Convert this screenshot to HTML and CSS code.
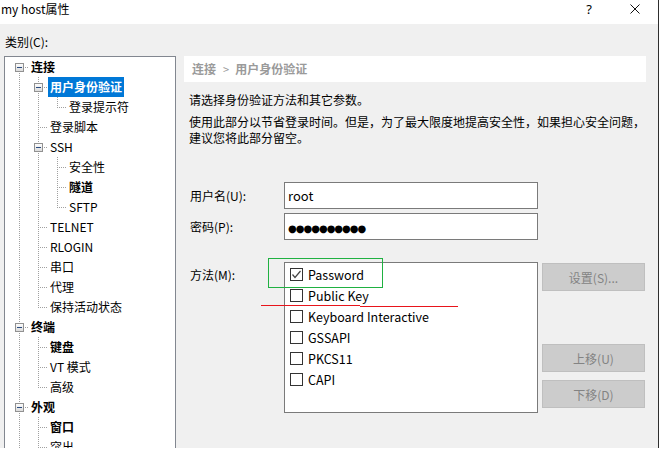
FILE: index.html
```html
<!DOCTYPE html>
<html>
<head>
    <meta charset="UTF-8">
    <title>my host属性</title>
    <link rel="stylesheet" href="styles.css">
</head>
<body>
    <div class="window">
        <div class="titlebar">
            <span class="title">my host属性</span>
            <span class="caption-btn help">?</span>
            <span class="caption-btn close">
                <svg width="10" height="10" viewBox="0 0 10 10"><path d="M0.5 0.5L9.5 9.5M9.5 0.5L0.5 9.5" stroke="#111" stroke-width="1" fill="none"/></svg>
            </span>
        </div>

        <div class="dialog">
            <div class="cat-label">类别(C):</div>
            <div class="main">
                <!-- category tree: each cell draws one column of connector lines -->
                <ul class="tree">
                    <li class="node"><span class="c xd"><span class="exp"></span></span><span class="lbl bold">连接</span></li>
                    <li class="node"><span class="c v"></span><span class="c xud"><span class="exp"></span></span><span class="lbl bold selected">用户身份验证</span></li>
                    <li class="node"><span class="c v"></span><span class="c v"></span><span class="c e"></span><span class="lbl">登录提示符</span></li>
                    <li class="node"><span class="c v"></span><span class="c t"></span><span class="lbl">登录脚本</span></li>
                    <li class="node"><span class="c v"></span><span class="c xud"><span class="exp"></span></span><span class="lbl">SSH</span></li>
                    <li class="node"><span class="c v"></span><span class="c v"></span><span class="c t"></span><span class="lbl">安全性</span></li>
                    <li class="node"><span class="c v"></span><span class="c v"></span><span class="c t"></span><span class="lbl bold">隧道</span></li>
                    <li class="node"><span class="c v"></span><span class="c v"></span><span class="c e"></span><span class="lbl">SFTP</span></li>
                    <li class="node"><span class="c v"></span><span class="c t"></span><span class="lbl">TELNET</span></li>
                    <li class="node"><span class="c v"></span><span class="c t"></span><span class="lbl">RLOGIN</span></li>
                    <li class="node"><span class="c v"></span><span class="c t"></span><span class="lbl">串口</span></li>
                    <li class="node"><span class="c v"></span><span class="c t"></span><span class="lbl">代理</span></li>
                    <li class="node"><span class="c v"></span><span class="c e"></span><span class="lbl">保持活动状态</span></li>
                    <li class="node"><span class="c xud"><span class="exp"></span></span><span class="lbl bold">终端</span></li>
                    <li class="node"><span class="c v"></span><span class="c t"></span><span class="lbl bold">键盘</span></li>
                    <li class="node"><span class="c v"></span><span class="c t"></span><span class="lbl">VT 模式</span></li>
                    <li class="node"><span class="c v"></span><span class="c e"></span><span class="lbl">高级</span></li>
                    <li class="node"><span class="c xud"><span class="exp"></span></span><span class="lbl bold">外观</span></li>
                    <li class="node"><span class="c v"></span><span class="c t"></span><span class="lbl bold">窗口</span></li>
                    <li class="node"><span class="c v"></span><span class="c t"></span><span class="lbl">突出</span></li>
                </ul>

                <div class="page">
                    <div class="crumb">连接<span class="sep">&gt;</span>用户身份验证</div>
                    <div class="desc">
                        <p>请选择身份验证方法和其它参数。</p>
                        <p>使用此部分以节省登录时间。但是，为了最大限度地提高安全性，如果担心安全问题，<br>建议您将此部分留空。</p>
                    </div>

                    <div class="form">
                        <div class="field">
                            <label>用户名(U):</label>
                            <div class="input">root</div>
                        </div>
                        <div class="field">
                            <label>密码(P):</label>
                            <div class="input"><span class="dots">●●●●●●●●●●</span></div>
                        </div>

                        <div class="method">
                            <label>方法(M):</label>
                            <ul class="list">
                                <li><span class="box">
                                    <svg width="11" height="11" viewBox="0 0 11 11"><path d="M1.5 5.5L4 8.5L9.5 2" stroke="#444" stroke-width="1.2" fill="none"/></svg>
                                </span>Password</li>
                                <li><span class="box"></span>Public Key</li>
                                <li><span class="box"></span>Keyboard Interactive</li>
                                <li><span class="box"></span>GSSAPI</li>
                                <li><span class="box"></span>PKCS11</li>
                                <li><span class="box"></span>CAPI</li>
                            </ul>
                            <div class="buttons">
                                <button class="btn btn-setup">设置(S)...</button>
                                <button class="btn btn-up">上移(U)</button>
                                <button class="btn btn-down">下移(D)</button>
                            </div>

                            <!-- marker strokes drawn over the list -->
                            <div class="mark-green"></div>
                            <div class="mark-red mark-red-a"></div>
                            <div class="mark-red mark-red-b"></div>
                        </div>
                    </div>
                </div>
            </div>
        </div>
    </div>
</body>
</html>
```

FILE: styles.css
```css
body {
    margin: 0;
    background: #fff;
    font-family: "Noto Sans CJK SC", sans-serif;
    font-size: 12px;
    color: #000;
}
.window {
    width: 659px;
    height: 448px;
    box-sizing: border-box;
    border-right: 1px solid #2e2e2e;
    overflow: hidden;
    display: flex;
    flex-direction: column;
}
.titlebar {
    height: 24px;
    flex: none;
    display: flex;
    line-height: 18px;
    background: #fff;
}
.title {
    flex: 1;
    padding-left: 1px;
}
.caption-btn {
    width: 46px;
    height: 18px;
    display: flex;
    justify-content: center;
    align-items: center;
}
.help {
    font-family: "Noto Sans", sans-serif;
    font-size: 13px;
}
.dialog {
    flex: 1;
    min-height: 0;
    background: #f0f0f0;
    padding: 10px 0 0 4px;
}
.cat-label {
    height: 16px;
    line-height: 16px;
    padding-left: 1px;
    margin-bottom: 6px;
}
.main {
    display: flex;
    align-items: flex-start;
}

/* tree */
.tree {
    width: 172px;
    height: 420px;
    box-sizing: border-box;
    border: 1px solid #828790;
    background: #fff;
    margin: 0;
    padding: 0 0 0 5px;
    list-style: none;
}
.node {
    display: flex;
    height: 20px;
    line-height: 20px;
    white-space: nowrap;
}
.c {
    flex: none;
    width: 19px;
    height: 20px;
    --vdot: repeating-linear-gradient(to bottom, #a0a0a0 0 1px, transparent 1px 2px);
    --hdot: repeating-linear-gradient(to right, #a0a0a0 0 1px, transparent 1px 2px);
}
.v {
    background: var(--vdot) 9px 0 / 1px 20px no-repeat;
}
.t {
    background: var(--vdot) 9px 0 / 1px 20px no-repeat,
                var(--hdot) 11px 10px / 8px 1px no-repeat;
}
.e {
    background: var(--vdot) 9px 0 / 1px 11px no-repeat,
                var(--hdot) 11px 10px / 8px 1px no-repeat;
}
.xd {
    background: var(--vdot) 9px 16px / 1px 4px no-repeat,
                var(--hdot) 15px 10px / 4px 1px no-repeat;
}
.xud {
    background: var(--vdot) 9px 0 / 1px 6px no-repeat,
                var(--vdot) 9px 16px / 1px 4px no-repeat,
                var(--hdot) 15px 10px / 4px 1px no-repeat;
}
.exp {
    display: block;
    width: 9px;
    height: 9px;
    box-sizing: border-box;
    margin: 6px 0 0 5px;
    border: 1px solid #919191;
    background: linear-gradient(#2b4c80, #2b4c80) center / 5px 1px no-repeat,
                linear-gradient(#fdfdfd, #dcdcdc);
}
.lbl {
    padding: 0 2px;
}
.bold {
    font-weight: bold;
}
.selected {
    background: #0078d7;
    color: #fff;
}

/* right page */
.page {
    width: 462px;
    margin-left: 8px;
}
.crumb {
    height: 26px;
    line-height: 26px;
    padding-left: 8px;
    background: #fff;
    color: #9a9a9a;
    font-weight: bold;
}
.crumb .sep {
    font-weight: normal;
    font-size: 11px;
    padding: 0 6px 0 7px;
}
.desc {
    padding: 10px 0 0 5px;
    line-height: 16px;
}
.desc p {
    margin: 0 0 6px 0;
}
.form {
    padding-left: 6px;
    margin-top: 36px;
}
.field {
    display: flex;
    height: 27px;
    margin-bottom: 4px;
}
.field label {
    width: 94px;
    line-height: 27px;
}
.input {
    width: 254px;
    height: 27px;
    box-sizing: border-box;
    border: 1px solid #7a7a7a;
    background: #fff;
    padding-left: 3px;
    line-height: 25px;
    font-size: 13px;
}
.dots {
    font-family: "DejaVu Sans", sans-serif;
    font-size: 10px;
    letter-spacing: -1px;
}
.method {
    position: relative;
    display: flex;
    margin-top: 22px;
}
.method label {
    width: 94px;
    line-height: 16px;
    padding-top: 5px;
}
.list {
    width: 254px;
    height: 151px;
    box-sizing: border-box;
    border: 1px solid #7a7a7a;
    background: #fff;
    margin: 0;
    padding: 1px 0 0 5px;
    list-style: none;
}
.list li {
    display: flex;
    align-items: center;
    height: 21px;
    font-size: 12.5px;
}
.box {
    width: 13px;
    height: 13px;
    box-sizing: border-box;
    border: 1px solid #333;
    background: #fff;
    margin-right: 5px;
    display: flex;
    align-items: center;
    justify-content: center;
}
.buttons {
    width: 103px;
    margin-left: 4px;
    display: flex;
    flex-direction: column;
}
.btn {
    height: 28px;
    padding: 0;
    border: 1px solid #bfbfbf;
    background: #cccccc;
    color: #838383;
    font-family: inherit;
    font-size: 12px;
}
.btn-setup {
    margin-top: 1px;
}
.btn-up {
    margin-top: 53px;
}
.btn-down {
    margin-top: 8px;
}
.mark-green {
    position: absolute;
    left: 78px;
    top: -4px;
    width: 115px;
    height: 30px;
    box-sizing: border-box;
    border: 1px solid #1fb141;
}
.mark-red {
    position: absolute;
    height: 1px;
    background: #e8141b;
}
.mark-red-a {
    left: 71px;
    top: 43px;
    width: 99px;
}
.mark-red-b {
    left: 170px;
    top: 44px;
    width: 98px;
}
```
